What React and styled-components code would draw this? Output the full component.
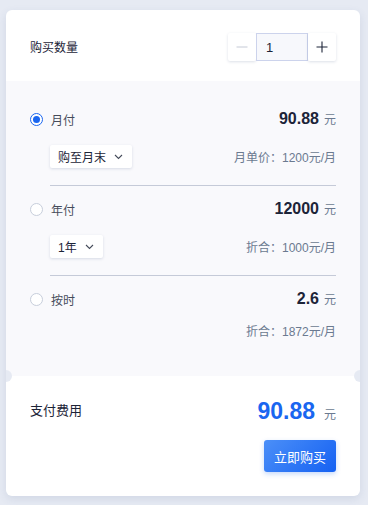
import React, { useState } from "react";
import styled, { createGlobalStyle } from "styled-components";

const GlobalStyle = createGlobalStyle`
  html, body {
    margin: 0;
    padding: 0;
    background: #e6eaf3;
    font-family: "Liberation Sans", "Noto Sans CJK SC", sans-serif;
  }
`;

const Page = styled.div`
  padding: 10px 8px 9px 6px;
  width: 368px;
  box-sizing: border-box;
`;

const Card = styled.div`
  width: 354px;
  background: #fff;
  border-radius: 6px;
  box-shadow: 0 3px 8px rgba(60, 80, 130, 0.12);
  overflow: hidden;
`;

const Header = styled.div`
  height: 71px;
  display: flex;
  align-items: center;
  justify-content: space-between;
  padding: 0 24px 0 24px;
  box-sizing: border-box;
`;

const Label = styled.span`
  font-size: 12px;
  color: #1c2438;
`;

const Stepper = styled.div`
  display: flex;
  align-items: center;
  margin-top: 3px;
`;

const StepButton = styled.button`
  width: 28px;
  height: 28px;
  border: none;
  background: #fff;
  box-shadow: 0 1px 3px rgba(40, 60, 110, 0.16);
  border-radius: 2px;
  display: flex;
  align-items: center;
  justify-content: center;
  padding: 0;
`;

const StepInput = styled.div`
  width: 52px;
  height: 28px;
  box-sizing: border-box;
  border: 1px solid #ccd3ec;
  background: #f7f8fc;
  font-size: 13px;
  color: #1c2438;
  display: flex;
  align-items: center;
  padding-left: 9px;
`;

const Options = styled.div`
  position: relative;
  background: #f9f9fc;
  padding: 28px 24px 37px 24px;
  &::before,
  &::after {
    content: "";
    position: absolute;
    bottom: -6px;
    width: 12px;
    height: 12px;
    border-radius: 50%;
    background: #e6eaf3;
    z-index: 1;
  }
  &::before {
    left: -6px;
  }
  &::after {
    right: -6px;
  }
`;

const Plan = styled.div`
  padding-left: 20px;
`;

const PlanRow = styled.div`
  display: flex;
  align-items: center;
  justify-content: space-between;
  height: 20px;
  margin-left: -20px;
`;

const RadioLabel = styled.label`
  display: flex;
  align-items: center;
  gap: 8px;
  font-size: 12px;
  color: #464c5b;
`;

const Radio = styled.span`
  width: 13px;
  height: 13px;
  box-sizing: border-box;
  border-radius: 50%;
  border: 1.5px solid ${(p) => (p.$checked ? "#1a66f0" : "#c7cedb")};
  background: #fff;
  display: flex;
  align-items: center;
  justify-content: center;
  &::after {
    content: "";
    width: 7px;
    height: 7px;
    border-radius: 50%;
    background: ${(p) => (p.$checked ? "#1a66f0" : "transparent")};
  }
`;

const Price = styled.div`
  display: flex;
  align-items: baseline;
  gap: 5px;
`;

const Amount = styled.span`
  font-size: ${(p) => (p.$big ? "23px" : "16px")};
  font-weight: 700;
  color: ${(p) => (p.$big ? "#1a66f0" : "#1c2438")};
`;

const Unit = styled.span`
  font-size: 12px;
  color: #6b7a90;
`;

const SubRow = styled.div`
  display: flex;
  align-items: center;
  justify-content: space-between;
  height: ${(p) => (p.$compact ? "18px" : "23px")};
  margin-top: ${(p) => (p.$compact ? "12px" : "16px")};
`;

const Select = styled.div`
  height: 23px;
  box-sizing: border-box;
  background: #fff;
  box-shadow: 0 1px 3px rgba(40, 60, 110, 0.16);
  border-radius: 2px;
  display: flex;
  align-items: center;
  gap: 8px;
  padding: 0 9px 0 8px;
  font-size: 12px;
  color: #1c2438;
`;

const Note = styled.span`
  margin-left: auto;
  font-size: 12px;
  color: #6b7a90;
`;

const Divider = styled.div`
  height: 1px;
  background: #c5cad8;
  margin: 17px 0 13px;
`;

const Footer = styled.div`
  padding: 22px 24px 24px 24px;
`;

const TotalRow = styled.div`
  display: flex;
  align-items: center;
  justify-content: space-between;
`;

const FooterLabel = styled.span`
  font-size: 13px;
  color: #1c2438;
  margin-top: -4px;
`;

const Actions = styled.div`
  display: flex;
  justify-content: flex-end;
  margin-top: 15px;
`;

const BuyButton = styled.button`
  width: 72px;
  height: 32px;
  border: none;
  border-radius: 3px;
  background: linear-gradient(135deg, #4b8ff8 0%, #1561f2 100%);
  box-shadow: 0 2px 5px rgba(26, 102, 240, 0.25);
  color: #fff;
  font-size: 13px;
  font-family: inherit;
  padding: 0;
`;

const Chevron = () => (
  <svg width="9" height="6" viewBox="0 0 9 6" fill="none">
    <path d="M1 1l3.5 3.5L8 1" stroke="#464c5b" strokeWidth="1.1" />
  </svg>
);

const plans = [
  { key: "month", label: "月付", amount: "90.88", select: "购至月末", note: "月单价：1200元/月" },
  { key: "year", label: "年付", amount: "12000", select: "1年", note: "折合：1000元/月" },
  { key: "hour", label: "按时", amount: "2.6", note: "折合：1872元/月" },
];

export default function App() {
  const [qty] = useState(1);
  const [plan, setPlan] = useState("month");

  return (
    <Page>
      <GlobalStyle />
      <Card>
        <Header>
          <Label style={{ marginTop: 2 }}>购买数量</Label>
          <Stepper>
            <StepButton>
              <svg width="12" height="12" viewBox="0 0 12 12">
                <path d="M0.5 6h11" stroke="#c5cad6" strokeWidth="1" />
              </svg>
            </StepButton>
            <StepInput>{qty}</StepInput>
            <StepButton>
              <svg width="12" height="12" viewBox="0 0 12 12">
                <path d="M0.5 6h11M6 0.5v11" stroke="#1c2438" strokeWidth="1.1" />
              </svg>
            </StepButton>
          </Stepper>
        </Header>
        <Options>
          {plans.map((p, i) => (
            <Plan key={p.key}>
              <PlanRow>
                <RadioLabel onClick={() => setPlan(p.key)}>
                  <Radio $checked={plan === p.key} />
                  {p.label}
                </RadioLabel>
                <Price>
                  <Amount>{p.amount}</Amount>
                  <Unit>元</Unit>
                </Price>
              </PlanRow>
              <SubRow $compact={!p.select}>
                {p.select && (
                  <Select>
                    {p.select}
                    <Chevron />
                  </Select>
                )}
                <Note>{p.note}</Note>
              </SubRow>
              {i < plans.length - 1 && <Divider />}
            </Plan>
          ))}
        </Options>
        <Footer>
          <TotalRow>
            <FooterLabel>支付费用</FooterLabel>
            <Price>
              <Amount $big>90.88</Amount>
              <Unit style={{ marginLeft: 4 }}>元</Unit>
            </Price>
          </TotalRow>
          <Actions>
            <BuyButton>立即购买</BuyButton>
          </Actions>
        </Footer>
      </Card>
    </Page>
  );
}
